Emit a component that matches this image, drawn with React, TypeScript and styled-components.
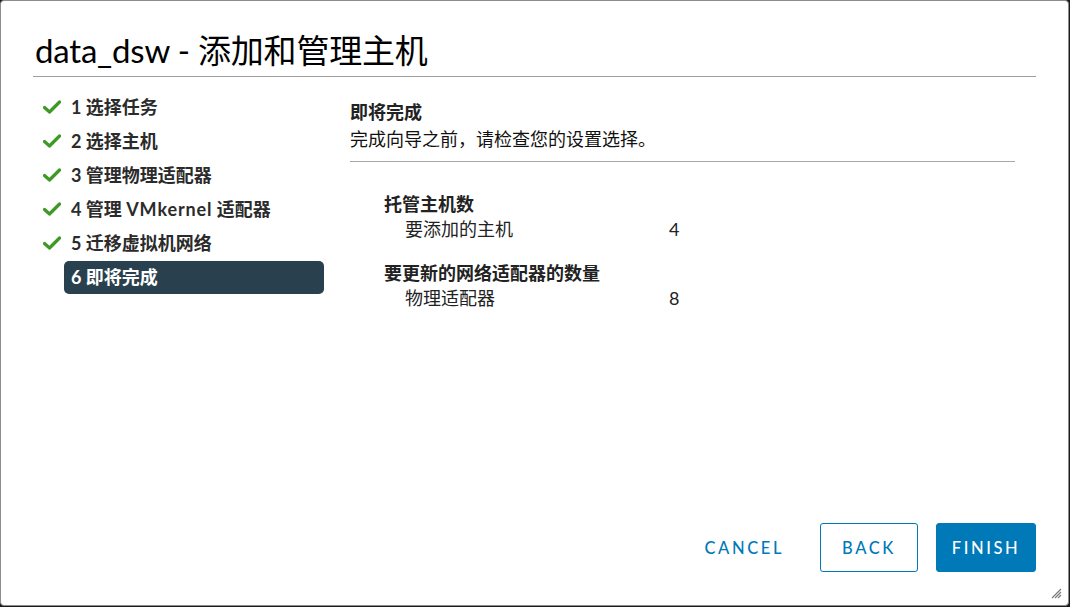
import React from "react";
import styled, { createGlobalStyle } from "styled-components";

const Global = createGlobalStyle`
  html, body { margin: 0; padding: 0; background: #1b1b1b; }
  body { font-family: "Lato", "Noto Sans CJK SC", sans-serif; }
  * { box-sizing: border-box; }
`;

const Dialog = styled.div`
  position: relative;
  width: 1069px;
  height: 606px;
  background: #fff;
  border: 1px solid #8c8c8c;
  border-radius: 4px;
  display: flex;
  flex-direction: column;
  padding: 0 32px;
`;

const Header = styled.div`
  height: 76px;
  border-bottom: 1px solid #9e9e9e;
  display: flex;
  align-items: flex-end;
  padding: 0 0 5px 2px;
`;

const Title = styled.h1`
  margin: 0;
  font-size: 33px;
  font-weight: 400;
  color: #000;
  line-height: 42px;
  letter-spacing: -0.2px;
`;

const Body = styled.div`
  flex: 1;
  display: grid;
  grid-template-columns: 291px 1fr;
  gap: 26px;
  padding-top: 12px;
`;

const Nav = styled.ul`
  list-style: none;
  margin: 0;
  padding: 1px 0 0 10px;
  display: flex;
  flex-direction: column;
`;

const NavItem = styled.li`
  display: flex;
  align-items: center;
  height: 34px;
`;

const IconSlot = styled.span`
  width: 21px;
  display: flex;
  align-items: center;
`;

const NavLabel = styled.span<{ $active?: boolean }>`
  flex: 1;
  height: 33px;
  line-height: 33px;
  padding-left: 7px;
  border-radius: 5px;
  font-size: 18px;
  font-weight: 700;
  white-space: nowrap;
  color: ${(p) => (p.$active ? "#fff" : "#2b2b2b")};
  background: ${(p) => (p.$active ? "#29404e" : "transparent")};
`;

const Latin = styled.span`
  letter-spacing: 0.9px;
`;

const Content = styled.div`
  width: 665px;
  display: flex;
  flex-direction: column;
`;

const PageTitle = styled.h2`
  margin: 0;
  font-size: 18px;
  font-weight: 700;
  color: #222;
  line-height: 22px;
  padding-top: 12px;
`;

const Subtitle = styled.p`
  margin: 4px 0 0;
  font-size: 18px;
  line-height: 24px;
  color: #111;
  padding-bottom: 10px;
  border-bottom: 1px solid #a8a8a8;
`;

const Summary = styled.div`
  padding: 30px 0 0 34px;
  display: flex;
  flex-direction: column;
  gap: 20px;
`;

const Group = styled.div`
  display: flex;
  flex-direction: column;
`;

const GroupTitle = styled.div`
  font-size: 18px;
  font-weight: 700;
  color: #222;
  line-height: 25px;
`;

const Row = styled.div`
  display: grid;
  grid-template-columns: 264px auto;
  padding-left: 21px;
  font-size: 18px;
  color: #222;
  line-height: 24px;
`;

const Footer = styled.div`
  display: flex;
  justify-content: flex-end;
  gap: 18px;
  padding-bottom: 33px;
`;

const Button = styled.button<{ $variant: "flat" | "outline" | "primary" }>`
  height: 49px;
  width: ${(p) =>
    p.$variant === "primary" ? "100px" : p.$variant === "outline" ? "98px" : "auto"};
  padding: ${(p) => (p.$variant === "flat" ? "0 17px 0 19px" : "0")};
  border-radius: 3px;
  font-family: "Lato", sans-serif;
  font-size: 16.5px;
  font-weight: 500;
  letter-spacing: 2.6px;
  cursor: pointer;
  border: 1px solid
    ${(p) => (p.$variant === "flat" ? "transparent" : "#0079b8")};
  background: ${(p) => (p.$variant === "primary" ? "#0079b8" : "#fff")};
  color: ${(p) => (p.$variant === "primary" ? "#fff" : "#0079b8")};
`;

const Grip = styled.svg`
  position: absolute;
  right: 6px;
  bottom: 6px;
`;

const Check = () => (
  <svg width="18" height="14" viewBox="0 0 18 14">
    <path
      d="M1.5 7.5 L6.5 12 L16.5 2"
      fill="none"
      stroke="#3d9a24"
      strokeWidth="3.2"
      strokeLinecap="round"
      strokeLinejoin="round"
    />
  </svg>
);

const steps: React.ReactNode[] = [
  "1 选择任务",
  "2 选择主机",
  "3 管理物理适配器",
  <>
    4 管理 <Latin>VMkernel</Latin> 适配器
  </>,
  "5 迁移虚拟机网络",
  "6 即将完成",
];

export default function App() {
  return (
    <>
      <Global />
      <Dialog>
        <Header>
          <Title>data_dsw - 添加和管理主机</Title>
        </Header>
        <Body>
          <Nav>
            {steps.map((s, i) => {
              const active = i === steps.length - 1;
              return (
                <NavItem key={i}>
                  <IconSlot>{!active && <Check />}</IconSlot>
                  <NavLabel $active={active}>{s}</NavLabel>
                </NavItem>
              );
            })}
          </Nav>
          <Content>
            <PageTitle>即将完成</PageTitle>
            <Subtitle>完成向导之前，请检查您的设置选择。</Subtitle>
            <Summary>
              <Group>
                <GroupTitle>托管主机数</GroupTitle>
                <Row>
                  <span>要添加的主机</span>
                  <span>4</span>
                </Row>
              </Group>
              <Group>
                <GroupTitle>要更新的网络适配器的数量</GroupTitle>
                <Row>
                  <span>物理适配器</span>
                  <span>8</span>
                </Row>
              </Group>
            </Summary>
          </Content>
        </Body>
        <Footer>
          <Button $variant="flat">CANCEL</Button>
          <Button $variant="outline">BACK</Button>
          <Button $variant="primary">FINISH</Button>
        </Footer>
        <Grip width="13" height="13" viewBox="0 0 13 13">
          <path d="M12 3 L3 12 M12 6 L6 12 M12 9 L9 12" stroke="#7a7a7a" strokeWidth="1.2" />
        </Grip>
      </Dialog>
    </>
  );
}
